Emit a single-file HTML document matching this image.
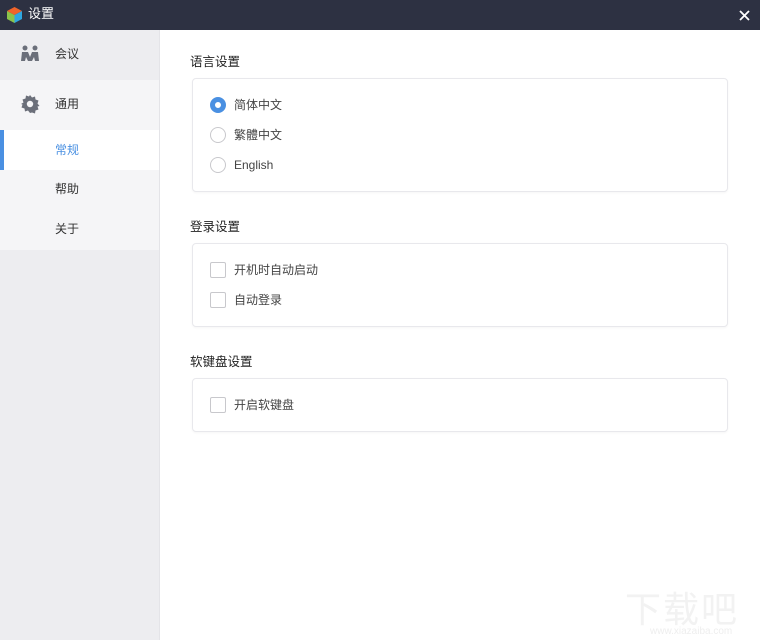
<!DOCTYPE html>
<html><head><meta charset="utf-8"><style>
*{margin:0;padding:0;box-sizing:border-box}
body{width:760px;height:640px;overflow:hidden;background:#fff;font-family:"Liberation Sans","Noto Sans CJK SC",sans-serif;font-size:12px;line-height:16px;color:#333;position:relative}
.title{position:absolute;left:0;top:0;width:760px;height:30px;background:#2d3142;color:#fff}
.title span{position:absolute;left:28px;top:6px;font-size:13px;line-height:16px}
.side{position:absolute;left:0;top:30px;width:160px;height:610px;background:#ededf0;border-right:1px solid #e4e4e8}
.it{position:absolute;left:0;width:159px;background:#f5f5f7}
.it span{position:absolute;left:55px;line-height:16px}
.box{position:absolute;left:192px;width:536px;border:1px solid #e8e8ec;border-radius:4px;background:#fff;box-shadow:0 1px 2px rgba(0,0,0,.04)}
.h{position:absolute;left:190px;font-size:12.5px;line-height:16px;color:#222}
.row{position:absolute;left:210px;height:16px}
.row span{position:absolute;left:24px;top:0;line-height:16px;white-space:nowrap;color:#444}
.rad{position:absolute;left:0;top:0;width:16px;height:16px;border:1px solid #c8c8cc;border-radius:50%}
.rad.on{border:5px solid #4a90e2}
.chk{position:absolute;left:0;top:0;width:16px;height:16px;border:1px solid #c8c8cc;border-radius:2px}
</style></head><body>
<div class="title">
<svg style="position:absolute;left:6px;top:6px" width="17" height="18" viewBox="0 0 17 18"><polygon points="8.5,1 16,5 8.5,9 1,5" fill="#f0642a"/><polygon points="1,5 8.5,9 8.5,17 1,13" fill="#8bc34a"/><polygon points="16,5 8.5,9 8.5,17 16,13" fill="#2fa7e0"/></svg>
<span>设置</span>
<svg style="position:absolute;left:739px;top:10px" width="11" height="11"><path d="M1 1L10 10M10 1L1 10" stroke="#fff" stroke-width="1.8"/></svg>
</div>
<div class="side">
<div class="it" style="top:0;height:50px;background:#ededf0">
<svg style="position:absolute;left:20px;top:15px" width="20" height="18" viewBox="0 0 20 18"><circle cx="5" cy="3" r="2.5" fill="#6b6f7a"/><circle cx="15" cy="3" r="2.5" fill="#6b6f7a"/><path d="M1 16L2 7h6l2 5 2-5h6l1 9h-4l-1-4-2 4h-4l-2-4-1 4z" fill="#6b6f7a"/></svg>
<span style="top:16px">会议</span></div>
<div class="it" style="top:50px;height:50px">
<svg style="position:absolute;left:20px;top:14px" width="20" height="20" viewBox="0 0 20 20"><path d="M10 1l2 2.5 3-1 .5 3 3 1-1 3 2 2.5-2 .5 1 3-3 1-.5 3-3-1L10 19l-2-2.5-3 1-.5-3-3-1 1-3L1 10l2.5-1.5-1-3 3-1 .5-3 3 1z" fill="#6b6f7a"/><circle cx="10" cy="10" r="3.2" fill="#f5f5f7"/></svg>
<span style="top:16px">通用</span></div>
<div class="it" style="top:100px;height:40px;background:#fff"><div style="position:absolute;left:0;top:0;width:4px;height:40px;background:#4a90e2"></div><span style="top:12px;color:#4a90e2">常规</span></div>
<div class="it" style="top:140px;height:40px"><span style="top:11px">帮助</span></div>
<div class="it" style="top:180px;height:40px"><span style="top:11px">关于</span></div>
</div>
<div class="h" style="top:54px">语言设置</div>
<div class="box" style="top:78px;height:114px"></div>
<div class="row" style="top:97px"><div class="rad on"></div><span>简体中文</span></div>
<div class="row" style="top:127px"><div class="rad"></div><span>繁體中文</span></div>
<div class="row" style="top:157px"><div class="rad"></div><span>English</span></div>
<div class="h" style="top:219px">登录设置</div>
<div class="box" style="top:243px;height:84px"></div>
<div class="row" style="top:262px"><div class="chk"></div><span>开机时自动启动</span></div>
<div class="row" style="top:292px"><div class="chk"></div><span>自动登录</span></div>
<div class="h" style="top:354px">软键盘设置</div>
<div class="box" style="top:378px;height:54px"></div>
<div class="row" style="top:397px"><div class="chk"></div><span>开启软键盘</span></div>
<div style="position:absolute;left:625px;top:590px;font-size:36px;line-height:40px;color:#f2f2f2;letter-spacing:2px">下载吧</div>
<div style="position:absolute;left:650px;top:626px;font-size:10px;line-height:12px;color:#eeeeee">www.xiazaiba.com</div>
</body></html>
